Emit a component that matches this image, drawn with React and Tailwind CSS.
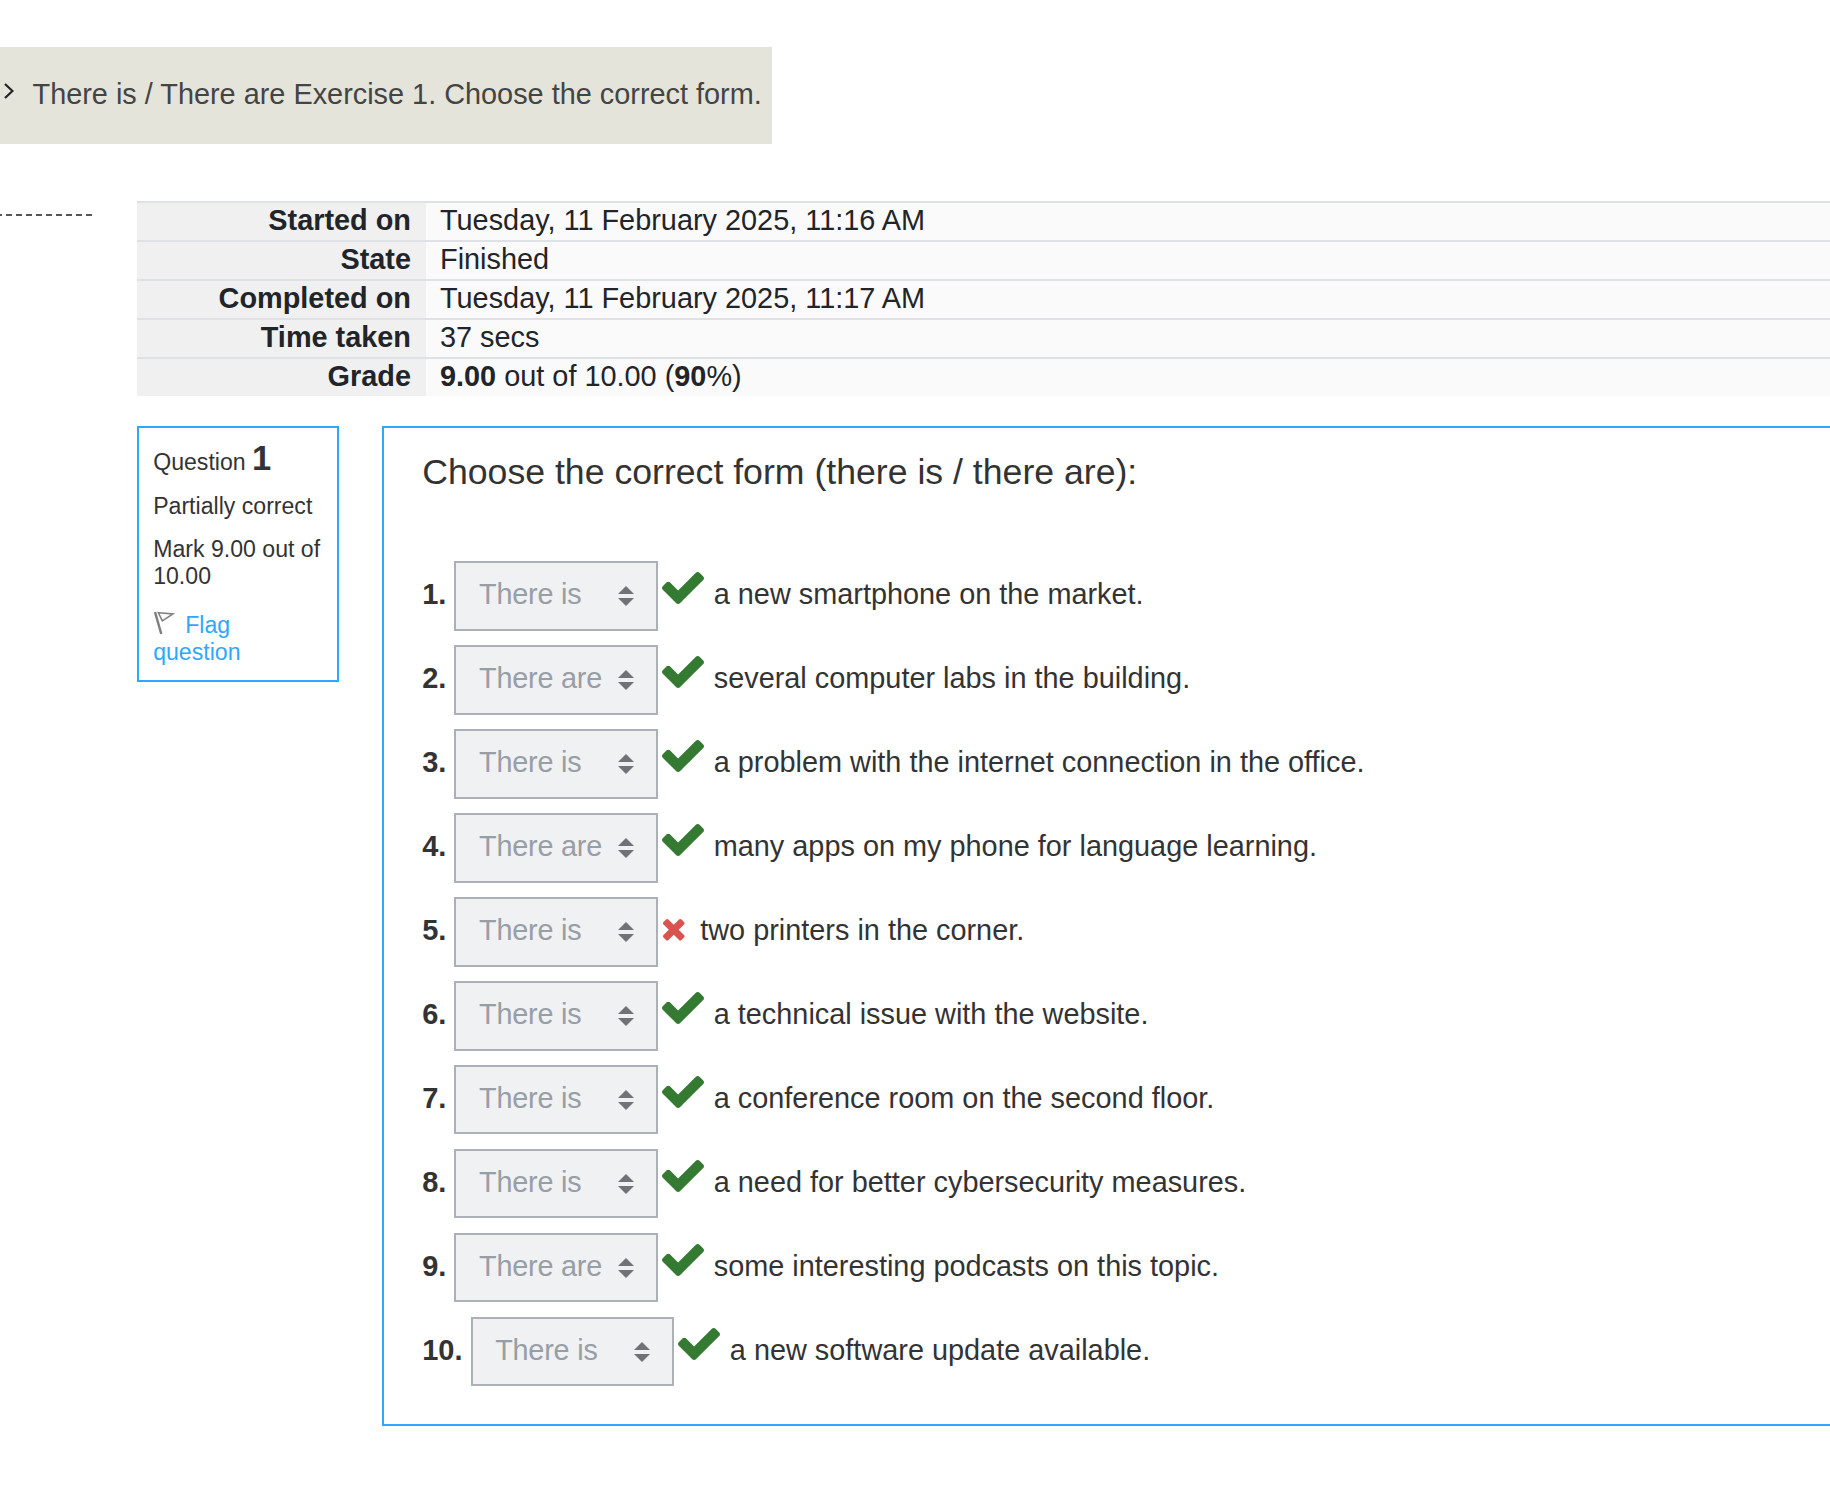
const summary = [
  ["Started on", "Tuesday, 11 February 2025, 11:16 AM"],
  ["State", "Finished"],
  ["Completed on", "Tuesday, 11 February 2025, 11:17 AM"],
  ["Time taken", "37 secs"],
  ["Grade", <><b>9.00</b> out of 10.00 (<b>90</b>%)</>],
];

const items = [
  ["There is", true, "a new smartphone on the market."],
  ["There are", true, "several computer labs in the building."],
  ["There is", true, "a problem with the internet connection in the office."],
  ["There are", true, "many apps on my phone for language learning."],
  ["There is", false, "two printers in the corner."],
  ["There is", true, "a technical issue with the website."],
  ["There is", true, "a conference room on the second floor."],
  ["There is", true, "a need for better cybersecurity measures."],
  ["There are", true, "some interesting podcasts on this topic."],
  ["There is", true, "a new software update available."],
];

function Check() {
  return (
    <svg className="mt-[10.8px] ml-[3.6px] h-8 w-[42px] shrink-0 self-start fill-[#357a32]" viewBox="121 334 1550 1188" preserveAspectRatio="none">
      <path d="M1671 566q0 40-28 68l-724 724-136 136q-28 28-68 28t-68-28l-136-136-362-362q-28-28-28-68t28-68l136-136q28-28 68-28t68 28l294 295 656-657q28-28 68-28t68 28l136 136q28 28 28 68z" />
    </svg>
  );
}

function Cross() {
  return (
    <svg className="mt-[22px] ml-[5.2px] size-[21.5px] shrink-0 self-start fill-[#d9534f]" viewBox="302 366 1188 1188">
      <path d="M1490 1322q0 40-28 68l-136 136q-28 28-68 28t-68-28l-294-294-294 294q-28 28-68 28t-68-28l-136-136q-28-28-28-68t28-68l294-294-294-294q-28-28-28-68t28-68l136-136q28-28 68-28t68 28l294 294 294-294q28-28 68-28t68 28l136 136q28 28 28 68t-28 68l-294 294 294 294q28 28 28 68z" />
    </svg>
  );
}

function Select({ value }) {
  return (
    <div className="flex h-[69.55px] w-[203.6px] shrink-0 items-start justify-between border-2 border-[#acb1b9] bg-[#f0f1f3] pt-[13px] pr-[22px] pl-[22.6px] text-[28.8px] leading-9 tracking-[-0.2px] text-[#979ea5]">
      <span>{value}</span>
      <svg className="mt-[10px] h-5 w-4 fill-[#6f7378]" viewBox="0 0 4 5">
        <path d="M2 0L0 2h4zm0 5L0 3h4z" />
      </svg>
    </div>
  );
}

export default function App() {
  return (
    <div className="h-[1508px] w-full overflow-hidden bg-white pt-[47px] font-['Liberation_Sans',Arial,sans-serif] text-[28.86px] text-[#333]">
      <nav className="flex h-[97px] w-[772px] items-center bg-[#e4e4da] pb-[2px] text-[#444]">
        <svg className="mb-2 ml-1 h-4 w-[10px] shrink-0" viewBox="0 0 10 16" fill="none" stroke="#222" strokeWidth="2.2">
          <path d="M1 1L8.5 8L1 15" />
        </svg>
        <span className="ml-[18.5px] whitespace-nowrap">There is / There are Exercise 1. Choose the correct form.</span>
      </nav>

      <div className="mt-[57px] flex">
        <div className="mt-[13px] mr-[45px] -ml-1 h-0 w-24 shrink-0 border-t-2 border-dashed border-[#55555a]" />
        <main className="min-w-0 flex-1">
          <div className="text-[#212529]">
            {summary.map(([label, value]) => (
              <div key={label} className="flex h-[39px] border-t-2 border-[#dee2e6] leading-[34px]">
                <div className="w-[289px] bg-[#f0f0f0] pr-[15px] text-right font-bold">{label}</div>
                <div className="flex-1 bg-[#fafafa] pl-[14px]">{value}</div>
              </div>
            ))}
          </div>

          <div className="mt-[30px] flex items-start">
            <aside className="h-64 w-[202px] shrink-0 border-2 border-[#2ea8ff] pt-3 pl-[14.2px] text-[23.1px] leading-[27px]">
              <h3 className="leading-9">Question <b className="text-[34.5px]">1</b></h3>
              <p className="mt-[13px]">Partially correct</p>
              <p className="mt-4">Mark 9.00 out of 10.00</p>
              <p className="mt-[21px] w-[120px] text-[#2ea8ff]">
                <svg className="mr-[10px] inline h-6 w-[22px] align-[-2px]" viewBox="0 0 22 24" fill="none" stroke="#808080">
                  <path d="M2 1L8.3 23" strokeWidth="2.5" />
                  <path d="M5.3 1.7L20 2.9L9.3 9.8Z" strokeWidth="1.5" />
                </svg>
                Flag question
              </p>
            </aside>

            <section className="ml-[43px] h-[1000px] flex-1 border-2 border-r-0 border-[#2ea8ff] pt-[23px] pl-[38.2px]">
              <h2 className="h-[110.3px] text-[35.65px] leading-[42px]">Choose the correct form (there is / there are):</h2>
              <ol className="flex flex-col gap-[14.4px]">
                {items.map(([value, right, text], i) => (
                  <li key={text} className="flex h-[69.55px] items-start leading-9">
                    <b className="mr-[8.05px] pt-[15px] text-[29px]">{i + 1}.</b>
                    <Select value={value} />
                    {right ? <Check /> : <Cross />}
                    <span className={right ? "pt-[15px] pl-[10.1px]" : "pt-[15px] pl-[15.5px]"}>{text}</span>
                  </li>
                ))}
              </ol>
            </section>
          </div>
        </main>
      </div>
    </div>
  );
}
